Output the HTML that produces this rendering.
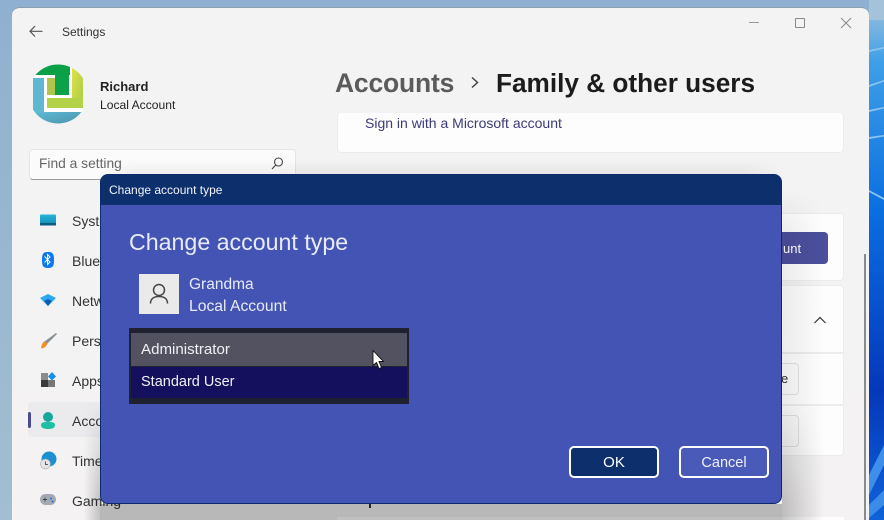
<!DOCTYPE html>
<html><head><meta charset="utf-8"><style>
html,body{margin:0;padding:0;width:884px;height:520px;overflow:hidden}
body{position:relative;background:#9bb8d2;font-family:"Liberation Sans",sans-serif;color:#1c1c1c}
#r{position:absolute;left:0;top:0;width:884px;height:520px;overflow:hidden}
.a{position:absolute;white-space:nowrap}
.card{position:absolute;background:#fdfdfd;border:1px solid #ececec;box-sizing:border-box;border-radius:4px}
</style></head><body><div id="r">
<svg class="a" style="left:0;top:0" width="884" height="520" viewBox="0 0 884 520">
<defs>
<linearGradient id="l" x1="0" y1="0" x2="0" y2="1"><stop offset="0" stop-color="#8fb0d0"/><stop offset="1" stop-color="#a2bed0"/></linearGradient>
<linearGradient id="w" x1="0" y1="0" x2="0" y2="1"><stop offset="0" stop-color="#a4c2da"/><stop offset=".12" stop-color="#3f9fe8"/><stop offset=".4" stop-color="#0b6fe0"/><stop offset=".75" stop-color="#0538b8"/><stop offset="1" stop-color="#0f62d8"/></linearGradient>
</defs>
<rect width="884" height="520" fill="url(#l)"/>
<rect x="869" y="0" width="15" height="520" fill="url(#w)"/>
<rect x="869" y="0" width="15" height="20" fill="#a4c2da"/>
<path d="M869 50L884 47V48.500L869 52ZM869 85L884 80V81.500L869 87ZM869 110L884 107V108.500L869 112ZM869 137L884 135V136.500L869 139ZM869 190L884 198V200L869 192Z" fill="#8cc4ee"/>
<path d="M869 475L884 445V465L869 495Z" fill="#3f8eea"/><path d="M869 505L884 490V505L869 518Z" fill="#3a8ce8"/>
</svg>

<div class="a" style="left:12px;top:7px;width:857px;height:513px;background:#f3f3f3;border-radius:8px 8px 0 0;border-top:1px solid #8b9fb0;box-sizing:border-box"></div>
<div class="a" style="left:12px;top:300px;width:857px;height:220px;background:linear-gradient(#f3f3f3,#f4f2f3)"></div>

<svg class="a" style="left:28px;top:22px" width="18" height="18" viewBox="0 0 18 18" fill="none" stroke="#555" stroke-width="1.200"><path d="M2 9.300H14.500M7 4L2 9.300L7 14.500"/></svg>
<div class="a" style="left:62px;top:25px;font-size:12px;color:#333">Settings</div>

<svg class="a" style="left:30px;top:63px" width="58" height="62" viewBox="30 63 58 62">
<defs>
<linearGradient id="av" x1="0" y1="0" x2="1" y2="1"><stop offset="0" stop-color="#e0e448"/><stop offset="1" stop-color="#a4c846"/></linearGradient>
<linearGradient id="bl" x1="0" y1="0" x2="1" y2="1"><stop offset="0" stop-color="#5fbbd6"/><stop offset="1" stop-color="#4b8fa8"/></linearGradient>
<clipPath id="c"><path d="M33 63H83V125H33Z" /></clipPath>
<clipPath id="c2"><circle cx="58" cy="94" r="29.500"/></clipPath>
</defs>
<g clip-path="url(#c)"><g clip-path="url(#c2)">
<rect x="30" y="63" width="58" height="62" fill="#fff"/>
<rect x="72" y="66" width="12" height="42" fill="url(#av)"/>
<rect x="47" y="98" width="37" height="10" fill="#b4d248"/>
<rect x="35" y="63" width="35" height="12" fill="#0b9f48"/>
<rect x="55" y="75" width="14" height="20" fill="#0ca24a"/>
<rect x="47" y="78" width="8" height="17" fill="#b2c44c"/>
<rect x="33" y="78" width="11" height="34" fill="#5fb8d2"/>
<rect x="33" y="112" width="50" height="13" fill="url(#bl)"/>
</g></g></svg>
<div class="a" style="left:100px;top:79px;font-size:13px;font-weight:bold;color:#222">Richard</div>
<div class="a" style="left:100px;top:98px;font-size:12.100px;color:#222">Local Account</div>

<div class="a" style="left:29px;top:149px;width:267px;height:31px;background:#fbfbfb;border:1px solid #e4e4e4;border-bottom-color:#9a9a9a;box-sizing:border-box;border-radius:4px"></div>
<div class="a" style="left:39px;top:156px;font-size:13.800px;color:#666">Find a setting</div>
<svg class="a" style="left:270px;top:156px" width="15" height="15" viewBox="0 0 15 15" fill="none" stroke="#444" stroke-width="1.100"><circle cx="8.500" cy="6" r="4"/><path d="M5.700 9L2 13"/></svg>

<!-- sidebar -->
<div class="a" style="left:28px;top:402px;width:80px;height:35px;background:#ebebee;border-radius:4px"></div>
<div class="a" style="left:28px;top:412px;width:3px;height:16px;background:#4c4a96;border-radius:2px"></div>
<div class="a" style="left:72px;top:213px;font-size:14px;color:#333">System</div>
<div class="a" style="left:72px;top:253px;font-size:14px;color:#333">Bluetooth</div>
<div class="a" style="left:72px;top:293px;font-size:14px;color:#333">Network</div>
<div class="a" style="left:72px;top:333px;font-size:14px;color:#333">Personal</div>
<div class="a" style="left:72px;top:373px;font-size:14px;color:#333">Apps</div>
<div class="a" style="left:72px;top:413px;font-size:14px;color:#333">Accounts</div>
<div class="a" style="left:72px;top:453px;font-size:14px;color:#333">Time</div>
<div class="a" style="left:72px;top:493px;font-size:14px;color:#333">Gaming</div>

<svg class="a" style="left:38px;top:212px" width="20" height="300" viewBox="0 0 20 300">
<defs><linearGradient id="s" x1="0" y1="0" x2="0" y2="1"><stop offset="0" stop-color="#28b4d8"/><stop offset="1" stop-color="#0d8cb4"/></linearGradient></defs>
<rect x="2" y="2.500" width="16" height="11" rx="1" fill="url(#s)"/><rect x="2" y="11" width="16" height="2.500" fill="#0d5f80"/>
<path d="M10 40C15 40 16 42 16 48C16 54 15 56 10 56C5 56 4 54 4 48C4 42 5 40 10 40Z" fill="#0a78ee"/>
<path d="M7 45L12.500 50.500L10 53V43L12.500 45.500L7 51" stroke="#fff" fill="none" stroke-width="1" transform="translate(-.5 -.5)"/>
<path d="M2 86L10 82L18 86L10 94Z" fill="#2ba8f0"/><path d="M6 89L10 87L14 89L10 94Z" fill="#0b5fb0"/>
<path d="M18 121L19 122L9 132L6.500 129.500Z" fill="#8a8f98"/><path d="M6.500 129L9.500 132L7 135.500L3 136.500C3.500 133 4.500 130.500 6.500 129Z" fill="#f0912a"/>
<path d="M3 161H10V168H3Z" fill="#8c8c8c"/><path d="M3 168H10V175H3Z" fill="#3a3a3a"/><path d="M10 168H17V175H10Z" fill="#777"/><path d="M14 160L18 164.500L14 168.500L10 164.500Z" fill="#1b8fe0"/>
<circle cx="10" cy="205" r="5" fill="#17a89a"/><path d="M3 213C3 210.500 5 210 10 210C15 210 17 210.500 17 213C17 216 14 217 10 217C6 217 3 216 3 213Z" fill="#1dbfa5"/>
<circle cx="11" cy="247" r="7.500" fill="#1f8fd4"/><circle cx="7.500" cy="252" r="5" fill="#e4e4e4" stroke="#999" stroke-width=".5"/><path d="M7.500 249.500V252.500H10" stroke="#333" fill="none" stroke-width=".8"/>
<rect x="2" y="282" width="16" height="11" rx="5.500" fill="#a4a9b4"/><path d="M5 287.500H9M7 285.500V289.500" stroke="#444" stroke-width=".9"/><circle cx="13" cy="286.500" r="1" fill="#1d70d0"/><circle cx="14.500" cy="289.500" r="1" fill="#1d70d0"/>
</svg>

<!-- header -->
<div class="a" style="left:335px;top:68px;font-size:26.500px;color:#5b5b5b;font-weight:bold;letter-spacing:-.2px">Accounts</div>
<svg class="a" style="left:467px;top:75px" width="16" height="16" viewBox="0 0 16 16" fill="none" stroke="#444" stroke-width="1.500"><path d="M5 2.500L10.500 7.500L5 12.500"/></svg>
<div class="a" style="left:496px;top:68px;font-size:26.200px;color:#1c1c1c;font-weight:bold">Family &amp; other users</div>

<!-- window controls -->
<div class="a" style="left:749px;top:22px;width:10px;height:1px;background:#999"></div>
<div class="a" style="left:795px;top:18px;width:10px;height:10px;border:1px solid #888;box-sizing:border-box;border-radius:1px"></div>
<svg class="a" style="left:840px;top:17px" width="12" height="12" viewBox="0 0 12 12" stroke="#888" stroke-width="1"><path d="M1 1L11 11M11 1L1 11"/></svg>

<!-- content cards -->
<div class="card" style="left:337px;top:113px;width:507px;height:40px;border-top:0"></div>
<div class="a" style="left:365px;top:115px;font-size:14px;color:#3c3a78">Sign in with a Microsoft account</div>
<div class="card" style="left:337px;top:213px;width:507px;height:68px"></div>
<div class="a" style="left:700px;top:232px;width:128px;height:32px;background:#4c4f9c;border-radius:4px"></div>
<div class="a" style="left:783px;top:241px;font-size:13px;color:#fff">unt</div>
<div class="card" style="left:337px;top:285px;width:507px;height:68px;border-radius:4px 4px 0 0"></div>
<svg class="a" style="left:813px;top:314px" width="14" height="12" viewBox="0 0 14 12" fill="none" stroke="#333" stroke-width="1.200"><path d="M1.500 9L7 3.500L12.500 9"/></svg>
<div class="card" style="left:337px;top:353px;width:507px;height:52px;border-radius:0"></div>
<div class="card" style="left:337px;top:405px;width:507px;height:51px;border-radius:0 0 4px 4px"></div>
<div class="a" style="left:700px;top:363px;width:99px;height:32px;background:#fcfcfc;border:1px solid #e2e2e2;box-sizing:border-box;border-radius:4px"></div>
<div class="a" style="left:781px;top:371px;font-size:13px;color:#333">e</div>
<div class="a" style="left:700px;top:415px;width:99px;height:32px;background:#fcfcfc;border:1px solid #e2e2e2;box-sizing:border-box;border-radius:4px"></div>
<div class="card" style="left:337px;top:517px;width:507px;height:3px;border-radius:0;border:0"></div>
<div class="a" style="left:864px;top:254px;width:2px;height:266px;background:#8a8a8a"></div>
<div class="a" style="left:369px;top:503px;width:2px;height:5px;background:#333"></div>

<!-- dialog shadow -->
<div class="a" style="left:100px;top:504px;width:682px;height:16px;background:rgba(0,0,0,.24)"></div>
<div class="a" style="left:782px;top:190px;width:42px;height:330px;background:linear-gradient(to right,rgba(0,0,0,.22),rgba(0,0,0,0));-webkit-mask-image:linear-gradient(to bottom,rgba(0,0,0,0) 0%,rgba(0,0,0,.3) 12%,rgba(0,0,0,.35) 65%,#000 95%);mask-image:linear-gradient(to bottom,rgba(0,0,0,0) 0%,rgba(0,0,0,.3) 12%,rgba(0,0,0,.35) 65%,#000 95%)"></div>
<div class="a" style="left:84px;top:400px;width:16px;height:120px;background:linear-gradient(to left,rgba(0,0,0,.2),rgba(0,0,0,0));-webkit-mask-image:linear-gradient(to bottom,rgba(0,0,0,0),#000 85%);mask-image:linear-gradient(to bottom,rgba(0,0,0,0),#000 85%)"></div>
<div class="a" style="left:100px;top:160px;width:682px;height:14px;background:linear-gradient(to top,rgba(0,0,0,.05),rgba(0,0,0,0));-webkit-mask-image:linear-gradient(to right,rgba(0,0,0,0),#000 5%,#000 95%,rgba(0,0,0,0));mask-image:linear-gradient(to right,rgba(0,0,0,0),#000 5%,#000 95%,rgba(0,0,0,0))"></div>

<!-- dialog -->
<div class="a" style="left:100px;top:174px;width:682px;height:330px;background:#4354b4;border:1px solid #0d2a6e;box-sizing:border-box;border-radius:8px;overflow:hidden">
<div style="position:absolute;left:0;top:0;right:0;height:30px;background:#0d2f6c"></div>
</div>
<div class="a" style="left:109px;top:183px;font-size:12px;color:#f2f4fa">Change account type</div>
<div class="a" style="left:129px;top:229px;font-size:23.200px;color:#e8ebf8">Change account type</div>
<div class="a" style="left:139px;top:274px;width:40px;height:40px;background:#e9eae9"></div>
<svg class="a" style="left:139px;top:274px" width="40" height="40" viewBox="0 0 40 40" fill="none" stroke="#454545" stroke-width="1.500"><circle cx="20" cy="16" r="5.500"/><path d="M11.500 29.500C11.500 25 14.500 22.500 20 22.500C25.500 22.500 28.500 25 28.500 29.500"/></svg>
<div class="a" style="left:189px;top:276px;font-size:15.500px;color:#e8ebf8">Grandma</div>
<div class="a" style="left:189px;top:298px;font-size:15.700px;color:#e8ebf8">Local Account</div>

<div class="a" style="left:129px;top:328px;width:280px;height:76px;background:#1f2030"></div>
<div class="a" style="left:131px;top:333px;width:276px;height:33px;background:#535260"></div>
<div class="a" style="left:131px;top:367px;width:276px;height:31px;background:#14105e"></div>
<div class="a" style="left:141px;top:341px;font-size:15.100px;color:#f0f0f4">Administrator</div>
<div class="a" style="left:141px;top:374px;font-size:14.500px;color:#f0f0f4">Standard User</div>
<svg class="a" style="left:371px;top:349px" width="14" height="22" viewBox="0 0 14 22"><path d="M2 1.500V16.500L5.500 13.500L8 19.500L10.500 18.500L8 12.500H12.500Z" fill="#fff" stroke="#111" stroke-width=".9"/></svg>

<div class="a" style="left:569px;top:446px;width:90px;height:32px;background:#0d2f6c;border:2px solid #fff;box-sizing:border-box;border-radius:5px;color:#fff;font-size:15px;line-height:30px;text-align:center">OK</div>
<div class="a" style="left:679px;top:446px;width:90px;height:32px;background:#4a5ab8;border:2px solid #fff;box-sizing:border-box;border-radius:5px;color:#f0f0f8;font-size:14.500px;line-height:30px;text-align:center">Cancel</div>
</div></body></html>
